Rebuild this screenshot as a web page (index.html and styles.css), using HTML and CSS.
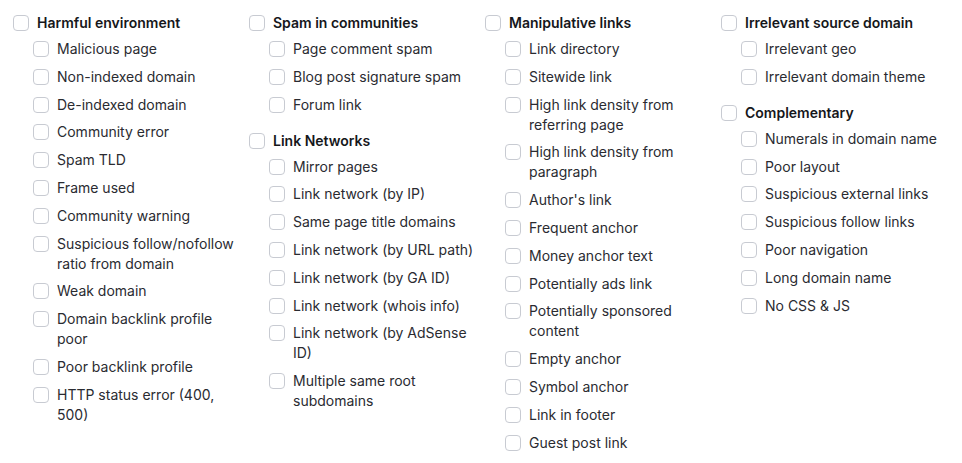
FILE: index.html
```html
<!DOCTYPE html>
<html lang="en">
<head>
    <meta charset="UTF-8">
    <meta name="viewport" content="width=device-width, initial-scale=1.0">
    <title>Link filters</title>
    <link rel="stylesheet" href="styles.css">
</head>
<body>
    <div class="filters">
        <div class="column">
            <div class="group">
                <label class="option option-parent"><input type="checkbox"><span>Harmful environment</span></label>
                <div class="children">
                    <label class="option"><input type="checkbox"><span>Malicious page</span></label>
                    <label class="option"><input type="checkbox"><span>Non-indexed domain</span></label>
                    <label class="option"><input type="checkbox"><span>De-indexed domain</span></label>
                    <label class="option"><input type="checkbox"><span>Community error</span></label>
                    <label class="option"><input type="checkbox"><span>Spam TLD</span></label>
                    <label class="option"><input type="checkbox"><span>Frame used</span></label>
                    <label class="option"><input type="checkbox"><span>Community warning</span></label>
                    <label class="option"><input type="checkbox"><span>Suspicious follow/nofollow ratio from domain</span></label>
                    <label class="option"><input type="checkbox"><span>Weak domain</span></label>
                    <label class="option"><input type="checkbox"><span>Domain backlink profile poor</span></label>
                    <label class="option"><input type="checkbox"><span>Poor backlink profile</span></label>
                    <label class="option"><input type="checkbox"><span>HTTP status error (400, 500)</span></label>
                </div>
            </div>
        </div>

        <div class="column">
            <div class="group">
                <label class="option option-parent"><input type="checkbox"><span>Spam in communities</span></label>
                <div class="children">
                    <label class="option"><input type="checkbox"><span>Page comment spam</span></label>
                    <label class="option"><input type="checkbox"><span>Blog post signature spam</span></label>
                    <label class="option"><input type="checkbox"><span>Forum link</span></label>
                </div>
            </div>
            <div class="group">
                <label class="option option-parent"><input type="checkbox"><span>Link Networks</span></label>
                <div class="children">
                    <label class="option"><input type="checkbox"><span>Mirror pages</span></label>
                    <label class="option"><input type="checkbox"><span>Link network (by IP)</span></label>
                    <label class="option"><input type="checkbox"><span>Same page title domains</span></label>
                    <label class="option"><input type="checkbox"><span>Link network (by URL path)</span></label>
                    <label class="option"><input type="checkbox"><span>Link network (by GA ID)</span></label>
                    <label class="option"><input type="checkbox"><span>Link network (whois info)</span></label>
                    <label class="option"><input type="checkbox"><span>Link network (by AdSense ID)</span></label>
                    <label class="option"><input type="checkbox"><span>Multiple same root subdomains</span></label>
                </div>
            </div>
        </div>

        <div class="column">
            <div class="group">
                <label class="option option-parent"><input type="checkbox"><span>Manipulative links</span></label>
                <div class="children">
                    <label class="option"><input type="checkbox"><span>Link directory</span></label>
                    <label class="option"><input type="checkbox"><span>Sitewide link</span></label>
                    <label class="option"><input type="checkbox"><span>High link density from referring page</span></label>
                    <label class="option"><input type="checkbox"><span>High link density from paragraph</span></label>
                    <label class="option"><input type="checkbox"><span>Author's link</span></label>
                    <label class="option"><input type="checkbox"><span>Frequent anchor</span></label>
                    <label class="option"><input type="checkbox"><span>Money anchor text</span></label>
                    <label class="option"><input type="checkbox"><span>Potentially ads link</span></label>
                    <label class="option"><input type="checkbox"><span>Potentially sponsored content</span></label>
                    <label class="option"><input type="checkbox"><span>Empty anchor</span></label>
                    <label class="option"><input type="checkbox"><span>Symbol anchor</span></label>
                    <label class="option"><input type="checkbox"><span>Link in footer</span></label>
                    <label class="option"><input type="checkbox"><span>Guest post link</span></label>
                </div>
            </div>
        </div>

        <div class="column">
            <div class="group">
                <label class="option option-parent"><input type="checkbox"><span>Irrelevant source domain</span></label>
                <div class="children">
                    <label class="option"><input type="checkbox"><span>Irrelevant geo</span></label>
                    <label class="option"><input type="checkbox"><span>Irrelevant domain theme</span></label>
                </div>
            </div>
            <div class="group">
                <label class="option option-parent"><input type="checkbox"><span>Complementary</span></label>
                <div class="children">
                    <label class="option"><input type="checkbox"><span>Numerals in domain name</span></label>
                    <label class="option"><input type="checkbox"><span>Poor layout</span></label>
                    <label class="option"><input type="checkbox"><span>Suspicious external links</span></label>
                    <label class="option"><input type="checkbox"><span>Suspicious follow links</span></label>
                    <label class="option"><input type="checkbox"><span>Poor navigation</span></label>
                    <label class="option"><input type="checkbox"><span>Long domain name</span></label>
                    <label class="option"><input type="checkbox"><span>No CSS &amp; JS</span></label>
                </div>
            </div>
        </div>
    </div>
</body>
</html>
```

FILE: styles.css
```css
body {
    margin: 0;
    background-color: #ffffff;
    font-family: Inter, "Noto Sans", Arial, sans-serif;
}
.filters {
    display: grid;
    grid-template-columns: repeat(4, 232px);
    column-gap: 4px;
    align-items: start;
    padding: 13px 0 0 13px;
}
.column {
    display: flex;
    flex-direction: column;
    gap: 16px;
}
.children {
    display: flex;
    flex-direction: column;
    gap: 7.8px;
    margin-top: 6px;
    padding-left: 20px;
}
.option {
    display: flex;
    align-items: flex-start;
    gap: 8px;
    font-size: 14px;
    line-height: 20px;
    color: #2a2b31;
    cursor: pointer;
}
.option input {
    appearance: none;
    -webkit-appearance: none;
    flex-shrink: 0;
    width: 16px;
    height: 16px;
    margin: 2px 0 0;
    border: 1px solid #c8cbd2;
    border-radius: 4px;
    background-color: #ffffff;
    cursor: pointer;
}
.option-parent {
    font-weight: 600;
    color: #16171b;
}
```
